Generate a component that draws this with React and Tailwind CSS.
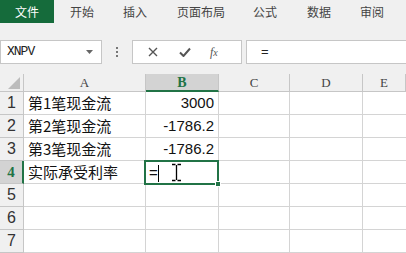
import React from "react";

const CJK = "font-['Microsoft_YaHei','Noto_Sans_CJK_SC',sans-serif]";
const cols = ["A", "B", "C", "D", "E"];
const data = [
  ["第1笔现金流", "3000"],
  ["第2笔现金流", "-1786.2"],
  ["第3笔现金流", "-1786.2"],
  ["实际承受利率", ""],
  ["", ""],
  ["", ""],
  ["", ""],
];

function IBeam() {
  return (
    <svg width="11" height="19" viewBox="0 0 11 19" className="absolute left-[25px] top-[1px]">
      <path d="M1 1.5h3.5M6.5 1.5H10M5.5 2v15M1 17.5h3.5M6.5 17.5H10" stroke="#000" strokeWidth="1.3" fill="none" />
    </svg>
  );
}

export default function App() {
  return (
    <div className="w-[406px] h-[253px] overflow-hidden bg-[#f0f0f0] flex flex-col">
      {/* ribbon tabs */}
      <div className={`h-[23px] flex items-center text-[12px] text-[#444] ${CJK}`}>
        <div className="w-[54px] h-full bg-[#156b3b] text-white flex items-center justify-center">文件</div>
        <div className="flex">
          <span className="ml-[16px]">开始</span>
          <span className="ml-[29px]">插入</span>
          <span className="ml-[30px]">页面布局</span>
          <span className="ml-[28px]">公式</span>
          <span className="ml-[30px]">数据</span>
          <span className="ml-[29px]">审阅</span>
        </div>
      </div>

      {/* formula bar */}
      <div className="mt-[17px] h-[24px] flex items-stretch">
        <div className="w-[102px] bg-white border border-[#c6c6c6] flex items-center justify-between pl-[6px] pr-[8px]">
          <span className="font-['Liberation_Mono','DejaVu_Sans_Mono',monospace] text-[13px] text-[#222] tracking-[-1px]">XNPV</span>
          <svg width="7" height="4" viewBox="0 0 7 4"><path d="M0 0h7L3.5 4z" fill="#666" /></svg>
        </div>
        <div className="w-[30px] flex flex-col items-center justify-center gap-[2px]">
          <span className="w-[2px] h-[2px] bg-[#777]" />
          <span className="w-[2px] h-[2px] bg-[#777]" />
          <span className="w-[2px] h-[2px] bg-[#777]" />
        </div>
        <div className="w-[110px] bg-white border border-[#c6c6c6] flex items-center">
          <svg width="10" height="10" viewBox="0 0 10 10" className="ml-[15px]">
            <path d="M1 1l8 8M9 1l-8 8" stroke="#555" strokeWidth="1.4" />
          </svg>
          <svg width="12" height="10" viewBox="0 0 12 10" className="ml-[21px]">
            <path d="M1 5.5l3.5 3.5L11 1.5" stroke="#555" strokeWidth="2" fill="none" />
          </svg>
          <span className="ml-[19px] font-['Liberation_Serif',serif] italic text-[12px] text-[#555] leading-none">
            f<span className="text-[10px]">x</span>
          </span>
        </div>
        <div className="ml-[4px] flex-1 bg-white border border-[#c6c6c6] border-r-0 flex items-center pl-[14px]">
          <span className="font-['Liberation_Sans',sans-serif] text-[13px] text-[#222]">=</span>
        </div>
      </div>

      {/* sheet */}
      <div className="mt-[10px] flex-1 bg-white grid grid-cols-[24px_122px_73px_71px_73px_1fr] grid-rows-[18px_repeat(7,23px)] font-['Liberation_Sans',sans-serif]">
        <div className="bg-[#f0f0f0] border-r border-b border-[#c6c6c6] relative">
          <svg width="12" height="12" viewBox="0 0 12 12" className="absolute right-[3px] bottom-[2px]">
            <path d="M12 0v12H0z" fill="#bcbcbc" />
          </svg>
        </div>
        {cols.map((c) => (
          <div
            key={c}
            className={
              c === "B"
                ? "bg-[#d3d3d3] border-r border-[#c6c6c6] border-b-2 border-b-[#217346] flex items-center justify-center font-['Liberation_Serif',serif] font-bold text-[14px] text-[#217346]"
                : "bg-[#f0f0f0] border-r border-b border-[#c6c6c6] flex items-center justify-center font-['Liberation_Serif',serif] text-[13px] text-[#444]"
            }
          >
            {c}
          </div>
        ))}

        {data.map((row, i) => (
          <React.Fragment key={i}>
            <div
              className={
                i === 3
                  ? "bg-[#d3d3d3] border-r-2 border-r-[#217346] border-b border-[#c6c6c6] flex items-center justify-center font-bold text-[15px] text-[#217346] font-['Liberation_Serif',serif]"
                  : "bg-[#f0f0f0] border-r border-b border-[#c6c6c6] flex items-center justify-center text-[16px] text-[#333]"
              }
            >
              {i + 1}
            </div>
            <div className={`border-r border-b border-[#d4d4d4] flex items-center pl-[4px] text-[15px] text-[#111] ${CJK}`}>
              {row[0]}
            </div>
            <div className="border-r border-b border-[#d4d4d4] flex items-center justify-end pr-[4px] text-[15px] text-[#111] relative">
              {row[1]}
              {i === 3 && (
                <div className="absolute left-[-2px] top-[-1px] w-[75px] h-[25px] border-2 border-[#217346] z-10">
                  <span className="absolute left-[3px] top-[0px] text-[15px] text-[#111]">=</span>
                  <span className="absolute left-[12px] top-[3px] w-[1px] h-[17px] bg-black" />
                  <IBeam />
                  <span className="absolute right-[-4px] bottom-[-4px] w-[6px] h-[6px] bg-[#217346] border border-white" />
                </div>
              )}
            </div>
            <div className="border-r border-b border-[#d4d4d4]" />
            <div className="border-r border-b border-[#d4d4d4]" />
            <div className="border-b border-[#d4d4d4]" />
          </React.Fragment>
        ))}
      </div>
    </div>
  );
}
